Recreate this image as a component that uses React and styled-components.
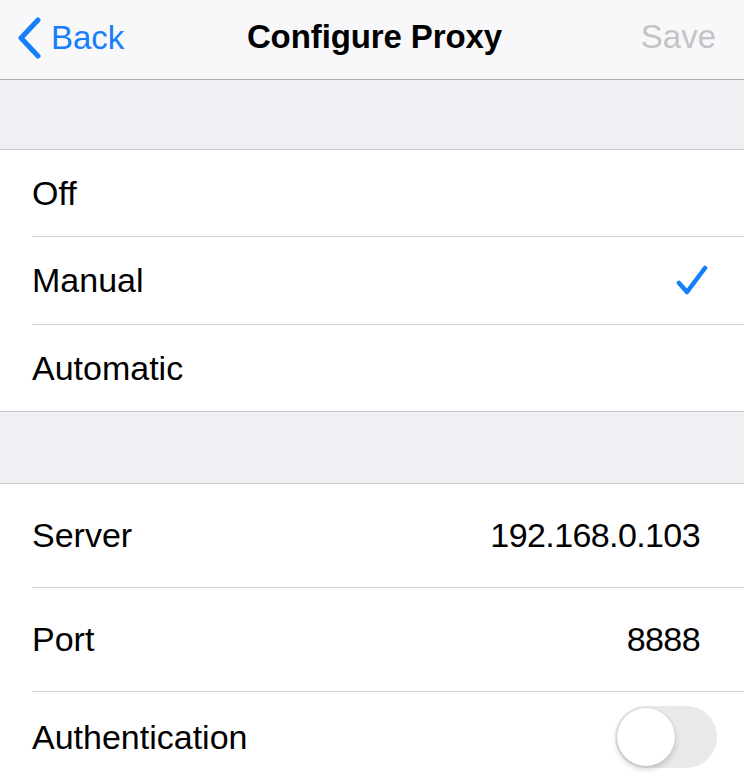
import React from "react";
import styled, { createGlobalStyle } from "styled-components";

//////////////Style Components////////////////////////////////
const GlobalStyle = createGlobalStyle`
  body {
    margin: 0;
    background: #efeff4;
    font-family: "Liberation Sans", Arial, sans-serif;
    -webkit-font-smoothing: antialiased;
  }
`;

const Page = styled.div`
  width: 744px;
  height: 775px;
  overflow: hidden;
  display: flex;
  flex-direction: column;
  background: #efeff4;
`;

const NavBar = styled.div`
  height: 79px;
  flex-shrink: 0;
  display: grid;
  grid-template-columns: 1fr auto 1fr;
  align-items: center;
  background: #f8f8fa;
  border-bottom: 1px solid #b1b1b4;
  padding: 0 28px 0 33px;
`;

const BackButton = styled.button`
  justify-self: start;
  display: flex;
  align-items: center;
  gap: 10px;
  border: none;
  background: none;
  padding: 0;
  margin-left: -16px;
  color: #157efb;
  font-family: inherit;
  font-size: 33px;
  margin-top: -3px;
`;

const Title = styled.h1`
  margin: 0;
  font-size: 33px;
  font-weight: 700;
  color: #000;
  letter-spacing: -0.1px;
  margin-top: -6px;
`;

const SaveButton = styled.button`
  justify-self: end;
  border: none;
  background: none;
  padding: 0;
  color: #c4c4c6;
  font-family: inherit;
  font-size: 33px;
  margin-top: -6px;
`;

const Spacer = styled.div`
  height: ${(p) => p.h}px;
  flex-shrink: 0;
`;

const Group = styled.div`
  background: #fff;
  border-top: 1px solid #c8c7cc;
  border-bottom: 1px solid #c8c7cc;
  flex-shrink: 0;
`;

const Row = styled.div`
  height: ${(p) => p.h}px;
  display: flex;
  align-items: center;
  justify-content: space-between;
  margin-left: 32px;
  padding-right: ${(p) => p.pr ?? 44}px;
  border-bottom: ${(p) => (p.last ? "none" : "1px solid #d1d1d5")};
`;

const Label = styled.span`
  font-size: 34px;
  color: #000;
  letter-spacing: 0;
`;

const Value = styled.span`
  font-size: 34px;
  color: #000;
  letter-spacing: -0.6px;
`;

const Toggle = styled.div`
  width: 102px;
  height: 62px;
  border-radius: 31px;
  background: #e9e9eb;
  display: flex;
  align-items: center;
  padding: 2px;
  box-sizing: border-box;
`;

const Knob = styled.div`
  width: 58px;
  height: 58px;
  border-radius: 50%;
  background: #fff;
  box-shadow: 0 3px 6px rgba(0, 0, 0, 0.18), 0 0 1px rgba(0, 0, 0, 0.2);
`;
/////////////////////////////////////////////////////

const Chevron = () => (
  <svg width="24" height="42" viewBox="0 0 24 42">
    <path
      d="M21 3 L4 21 L21 39"
      fill="none"
      stroke="#157efb"
      strokeWidth="5"
      strokeLinecap="round"
      strokeLinejoin="round"
    />
  </svg>
);

const Check = () => (
  <svg width="32" height="32" viewBox="0 0 32 32">
    <path
      d="M3 18 L11 27 L29 3"
      fill="none"
      stroke="#157efb"
      strokeWidth="4.5"
      strokeLinecap="round"
      strokeLinejoin="round"
    />
  </svg>
);

const modes = ["Off", "Manual", "Automatic"];

export default function App() {
  const selected = "Manual";

  return (
    <Page>
      <GlobalStyle />
      <NavBar>
        <BackButton>
          <Chevron />
          Back
        </BackButton>
        <Title>Configure Proxy</Title>
        <SaveButton>Save</SaveButton>
      </NavBar>
      <Spacer h={69} />
      <Group>
        {modes.map((m, i) => (
          <Row key={m} h={i === 1 ? 87 : 86} last={i === modes.length - 1} pr={36}>
            <Label>{m}</Label>
            {m === selected && <Check />}
          </Row>
        ))}
      </Group>
      <Spacer h={71} />
      <Group>
        <Row h={103}>
          <Label>Server</Label>
          <Value>192.168.0.103</Value>
        </Row>
        <Row h={103}>
          <Label>Port</Label>
          <Value>8888</Value>
        </Row>
        <Row h={90} last pr={27}>
          <Label>Authentication</Label>
          <Toggle>
            <Knob />
          </Toggle>
        </Row>
      </Group>
    </Page>
  );
}
